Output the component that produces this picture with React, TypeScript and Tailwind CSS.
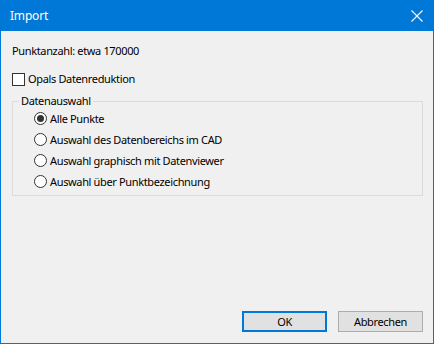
import React from 'react';

const font = { fontFamily: '"Noto Sans", "Open Sans", sans-serif' };

const Radio: React.FC<{ checked?: boolean; label: string }> = ({ checked, label }) => (
  <div className="flex items-center h-[21px]">
    <span className="w-[13px] h-[13px] rounded-full border border-[#333333] bg-white flex items-center justify-center shrink-0">
      {checked && <span className="w-[7px] h-[7px] rounded-full bg-[#333333]" />}
    </span>
    <span className="ml-[3px]">{label}</span>
  </div>
);

export default function App() {
  return (
    <div
      className="w-[434px] h-[344px] flex flex-col bg-[#f0f0f0] border border-t-0 border-[#0078d7] text-[11px] leading-[16px] tracking-[-0.35px] text-black"
      style={font}
    >
      <div className="h-[31px] shrink-0 bg-[#0078d7] flex items-center justify-between pl-[9px] pr-[9px] text-white text-[12px] tracking-[-0.2px]">
        <span>Import</span>
        <svg width="12" height="12" viewBox="0 0 12 12" className="mr-[1px]">
          <path d="M0.5 0.5 L11.5 11.5 M11.5 0.5 L0.5 11.5" stroke="white" strokeWidth="1.1" />
        </svg>
      </div>

      <div className="pl-[11px] mt-[12px]">Punktanzahl: etwa 170000</div>

      <div className="flex items-center pl-[11px] mt-[12px]">
        <span className="w-[13px] h-[13px] border border-[#333333] bg-white shrink-0" />
        <span className="ml-[3px]">Opals Datenreduktion</span>
      </div>

      <fieldset className="ml-[11px] mr-[10px] mt-[6px] border border-[#dcdcdc] p-0">
        <legend className="ml-[6px] px-[2px]">Datenauswahl</legend>
        <div className="pl-[21px] pb-[3px] -mt-[1px]">
          <Radio checked label="Alle Punkte" />
          <Radio label="Auswahl des Datenbereichs im CAD" />
          <Radio label="Auswahl graphisch mit Datenviewer" />
          <Radio label="Auswahl über Punktbezeichnung" />
        </div>
      </fieldset>

      <div className="mt-auto flex justify-end gap-[11px] pr-[10px] pb-[11px]">
        <button className="w-[85px] h-[21px] border-2 border-[#0078d7] bg-[#e1e1e1] text-black">OK</button>
        <button className="w-[85px] h-[21px] border border-[#adadad] bg-[#e1e1e1] text-black">Abbrechen</button>
      </div>
    </div>
  );
}
